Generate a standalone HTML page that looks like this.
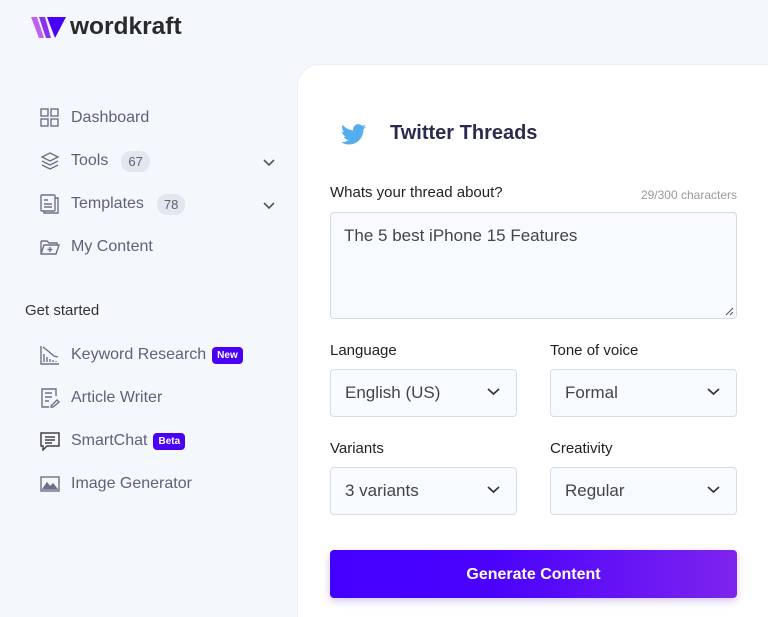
<!DOCTYPE html>
<html><head><style>
*{margin:0;padding:0;box-sizing:border-box}
html,body{width:768px;height:617px;overflow:hidden}
body{background:#f4f7fc;font-family:"Liberation Sans",sans-serif;position:relative}
.a{position:absolute}
.nav{position:absolute;left:40px;display:flex;align-items:center;font-size:16px;color:#5b6376;height:20px}
.nav svg{width:20px;height:20px;margin-right:11px}
.badge{display:inline-block;background:#e2e6ed;color:#5b6376;font-size:13px;border-radius:10px;padding:3px 7px;margin-left:13px}
.tag{display:inline-block;background:#4a00f5;color:#fff;font-size:10px;font-weight:bold;border-radius:4px;padding:3px 5px;margin-left:6px}
.chev{position:absolute;left:262px;width:14px;height:14px}
.card{position:absolute;left:297px;top:64px;width:480px;height:560px;background:#fff;border-radius:22px 0 0 0;border-left:1px solid #eceff4;border-top:1px solid #eceff4}
.lbl{position:absolute;font-size:15px;color:#222;font-weight:500}
.sel{position:absolute;width:187px;height:48px;background:#f7fafe;border:1px solid #d8dde5;border-radius:4px;font-size:17px;color:#444;padding:13px 14px}
.sel svg{position:absolute;right:16px;top:17px}
</style></head><body>
<svg class="a" style="left:31px;top:17px" width="35" height="22" viewBox="0 0 35 22"><polygon points="0,0 6,0 13,21 8,21" fill="#c060f0"/><polygon points="8,0 14,0 20,21 15,21" fill="#8a30f0"/><polygon points="16,0 35,0 24,21" fill="#4a00f5"/></svg>
<div class="a" style="left:70px;top:13px;font-size:24.5px;font-weight:bold;color:#2a2a2a">wordkraft</div>

<div class="nav" style="top:108px"><svg viewBox="0 0 20 20" fill="none" stroke="#6b7283" stroke-width="1.4"><rect x="1" y="1" width="7" height="7"/><rect x="11" y="1" width="7" height="7"/><rect x="1" y="11" width="7" height="7"/><rect x="11" y="11" width="7" height="7"/></svg>Dashboard</div>
<div class="nav" style="top:151px"><svg viewBox="0 0 20 20" fill="none" stroke="#6b7283" stroke-width="1.4"><path d="M10 2L18 6L10 10L2 6Z"/><path d="M2 10L10 14L18 10"/><path d="M2 14L10 18L18 14"/></svg>Tools<span class="badge">67</span></div>
<svg class="chev" style="top:155px" viewBox="0 0 14 14"><path d="M2 5L7 10L12 5" fill="none" stroke="#555" stroke-width="1.6"/></svg>
<div class="nav" style="top:194px"><svg viewBox="0 0 20 20" fill="none" stroke="#6b7283" stroke-width="1.4"><rect x="1" y="1" width="14" height="16" rx="1"/><path d="M4 17V19H18V4H15M4 6H8M4 10H12M4 13H12"/></svg>Templates<span class="badge">78</span></div>
<svg class="chev" style="top:198px" viewBox="0 0 14 14"><path d="M2 5L7 10L12 5" fill="none" stroke="#555" stroke-width="1.6"/></svg>
<div class="nav" style="top:237px"><svg viewBox="0 0 20 20" fill="none" stroke="#6b7283" stroke-width="1.4"><path d="M1 4H7L9 6H17V8M1 4V17H16L19 8H4L1 17"/><path d="M10 10V15M7.5 12.5H12.5"/></svg>My Content</div>

<div class="a" style="left:25px;top:302px;font-size:15px;color:#333;font-weight:500">Get started</div>
<div class="nav" style="top:345px"><svg viewBox="0 0 20 20" fill="none" stroke="#6b7283" stroke-width="1.4"><path d="M1 1V19H19M4 17V9M7 17V12M10 17V14M13 17V15M16 17V16M3 2L8 6L14 11L18 12"/></svg>Keyword Research<span class="tag">New</span></div>
<div class="nav" style="top:388px"><svg viewBox="0 0 20 20" fill="none" stroke="#6b7283" stroke-width="1.4"><path d="M16 8V1H2V19H9M5 5H12M5 9H12M5 13H9M11 18L17 12L19 14L13 19H11Z"/></svg>Article Writer</div>
<div class="nav" style="top:431px"><svg viewBox="0 0 20 20" fill="none" stroke="#444" stroke-width="1.5"><path d="M1 2H19V15H7L3 19V15H1Z"/><path d="M5 6H15M5 9H15M5 12H12"/></svg>SmartChat<span class="tag">Beta</span></div>
<div class="nav" style="top:474px"><svg viewBox="0 0 20 20" fill="none" stroke="#6b7283" stroke-width="1.4"><rect x="1" y="3" width="18" height="14"/><path d="M3 15L7 9L10 13L13 10L17 15Z" fill="#6b7283"/></svg>Image Generator</div>

<div class="card"></div>
<svg class="a" style="left:341px;top:124px" width="25" height="21" viewBox="0 0 24 20"><path fill="#55acee" d="M24 2.4c-.9.4-1.8.7-2.8.8 1-.6 1.8-1.6 2.2-2.7-1 .6-2 1-3.1 1.2C19.3.7 18 0 16.6 0c-2.7 0-4.9 2.2-4.9 4.9 0 .4 0 .8.1 1.1C7.7 5.8 4.1 3.9 1.7.9c-.4.7-.7 1.6-.7 2.5 0 1.7.9 3.2 2.2 4.1-.8 0-1.6-.2-2.200-.6v.1c0 2.4 1.7 4.4 3.9 4.8-.4.1-.8.2-1.3.2-.3 0-.6 0-.9-.1.6 2 2.4 3.4 4.600 3.4-1.7 1.3-3.8 2.1-6.1 2.1-.4 0-.8 0-1.2-.1C2.2 18.8 4.8 19.600 7.5 19.600c9.1 0 14-7.5 14-14v-.6c1-.7 1.8-1.6 2.5-2.6z"/></svg>
<div class="a" style="left:390px;top:122px;font-size:20px;font-weight:bold;color:#2b2b4d">Twitter Threads</div>
<div class="lbl" style="left:330px;top:184px">Whats your thread about?</div>
<div class="a" style="left:633px;top:188px;width:104px;text-align:right;font-size:12px;color:#999">29/300 characters</div>
<div class="a" style="left:330px;top:212px;width:407px;height:107px;background:#f7fafe;border:1px solid #d5dae2;border-radius:4px;padding:13px 13px;font-size:17px;color:#444">The 5 best iPhone 15 Features
<svg class="a" style="right:2px;bottom:2px" width="9" height="9"><path d="M8 1L1 8M8 5L5 8" stroke="#555" stroke-width="1"/></svg></div>

<div class="lbl" style="left:330px;top:342px">Language</div>
<div class="lbl" style="left:550px;top:342px">Tone of voice</div>
<div class="sel" style="left:330px;top:369px">English (US)<svg width="13" height="9"><path d="M1 2L6.5 7L12 2" fill="none" stroke="#333" stroke-width="1.7"/></svg></div>
<div class="sel" style="left:550px;top:369px">Formal<svg width="13" height="9"><path d="M1 2L6.5 7L12 2" fill="none" stroke="#333" stroke-width="1.7"/></svg></div>
<div class="lbl" style="left:330px;top:440px">Variants</div>
<div class="lbl" style="left:550px;top:440px">Creativity</div>
<div class="sel" style="left:330px;top:467px">3 variants<svg width="13" height="9"><path d="M1 2L6.5 7L12 2" fill="none" stroke="#333" stroke-width="1.7"/></svg></div>
<div class="sel" style="left:550px;top:467px">Regular<svg width="13" height="9"><path d="M1 2L6.5 7L12 2" fill="none" stroke="#333" stroke-width="1.7"/></svg></div>

<div class="a" style="left:330px;top:550px;width:407px;height:48px;border-radius:4px;background:linear-gradient(90deg,#4400fe 0%,#4a02fd 40%,#7e24ee 100%);box-shadow:0 3px 8px rgba(80,40,200,.25);color:#fff;font-size:16px;font-weight:bold;text-align:center;line-height:50px">Generate Content</div>
</body></html>
